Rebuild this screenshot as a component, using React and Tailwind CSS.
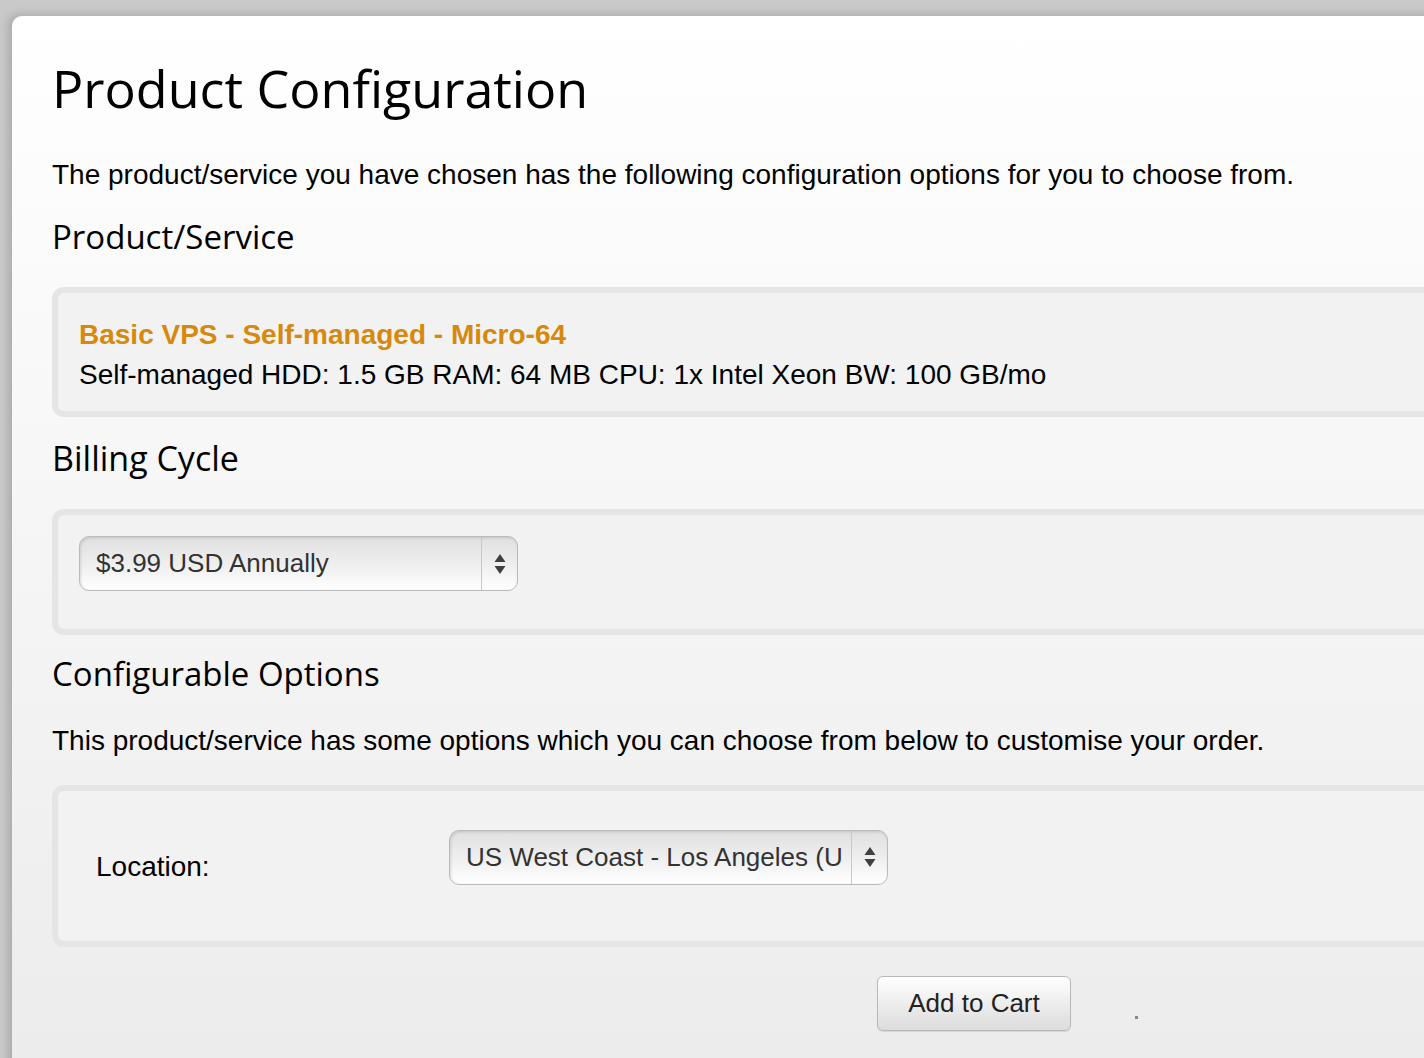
import React from 'react';

const heading = { fontFamily: '"Open Sans", "Noto Sans", sans-serif' };
const body = { fontFamily: '"Liberation Sans", Arial, sans-serif' };

const Arrows = () => (
    <svg width="14" height="26" viewBox="0 0 14 26" className="text-[#404040]">
        <path d="M7 3 L12.5 11 L1.5 11 Z" fill="currentColor" />
        <path d="M7 23 L12.5 15 L1.5 15 Z" fill="currentColor" />
    </svg>
);

const Select = ({ value, className = '' }) => (
    <div className={`flex h-[55px] w-[439px] items-stretch rounded-[10px] border border-[#bababa] bg-gradient-to-b from-[#e0e0e0] via-[#eeeeee] to-white shadow-[inset_1px_1px_3px_rgba(0,0,0,0.12)] ${className}`}>
        <div className="flex flex-1 items-center overflow-hidden pl-[16px]">
            <div className="mr-[8px] overflow-hidden whitespace-nowrap text-[26px] text-[#333]">{value}</div>
        </div>
        <div className="flex w-[36px] items-center justify-center border-l border-[#c8c8c8]">
            <Arrows />
        </div>
    </div>
);

const Box = ({ children, className = '' }) => (
    <div className={`rounded-[12px] border-[6px] border-[#e5e5e5] bg-[#f2f2f2] ${className}`}>
        {children}
    </div>
);

export default function App() {
    return (
        <div className="h-[1058px] w-[1424px] overflow-hidden bg-[#c9c9c9] pl-[12px] pt-[16px]" style={body}>
            <div className="relative h-[1100px] w-[1500px] rounded-tl-[10px] bg-gradient-to-b from-white to-[#ebebeb] pl-[40px] shadow-[-4px_-2px_8px_rgba(0,0,0,0.15)]">
                <h1 className="pt-[42px] text-[52px] leading-[60px] text-black" style={heading}>
                    Product Configuration
                </h1>
                <p className="mt-[42px] text-[28px] leading-[30px] text-black">
                    The product/service you have chosen has the following configuration options for you to choose from.
                </p>
                <h2 className="mt-[27px] text-[33px] leading-[40px] text-black" style={heading}>
                    Product/Service
                </h2>
                <Box className="mt-[30px] h-[130px] px-[21px] pt-[25px]">
                    <div className="text-[28px] font-bold leading-[34px] text-[#d6890c]">
                        Basic VPS - Self-managed - Micro-64
                    </div>
                    <div className="mt-[6px] text-[28px] leading-[34px] text-black">
                        Self-managed HDD: 1.5 GB RAM: 64 MB CPU: 1x Intel Xeon BW: 100 GB/mo
                    </div>
                </Box>
                <h2 className="mt-[21px] text-[34px] leading-[40px] text-black" style={heading}>
                    Billing Cycle
                </h2>
                <Box className="mt-[31px] h-[126px] px-[21px] pt-[21px]">
                    <Select value="$3.99 USD Annually" />
                </Box>
                <h2 className="mt-[19px] text-[33px] leading-[40px] text-black" style={heading}>
                    Configurable Options
                </h2>
                <p className="mt-[32px] text-[28px] leading-[30px] text-black">
                    This product/service has some options which you can choose from below to customise your order.
                </p>
                <Box className="mt-[29px] flex h-[162px] items-center pl-[38px]">
                    <div className="w-[353px] pt-[2px] text-[28px] leading-[32px] text-black">Location:</div>
                    <Select value="US West Coast - Los Angeles (USA)" className="mb-[18px]" />
                </Box>
                <div className="mt-[29px] flex items-start">
                    <button className="ml-[825px] h-[55px] w-[194px] rounded-[6px] border border-[#b9b9b9] bg-gradient-to-b from-white to-[#dcdcdc] text-[26px] text-[#222] shadow-[0_1px_1px_rgba(0,0,0,0.1)]">
                        Add to Cart
                    </button>
                    <span className="ml-[64px] mt-[40px] h-[3px] w-[3px] bg-[#888]" />
                </div>
            </div>
        </div>
    );
}
